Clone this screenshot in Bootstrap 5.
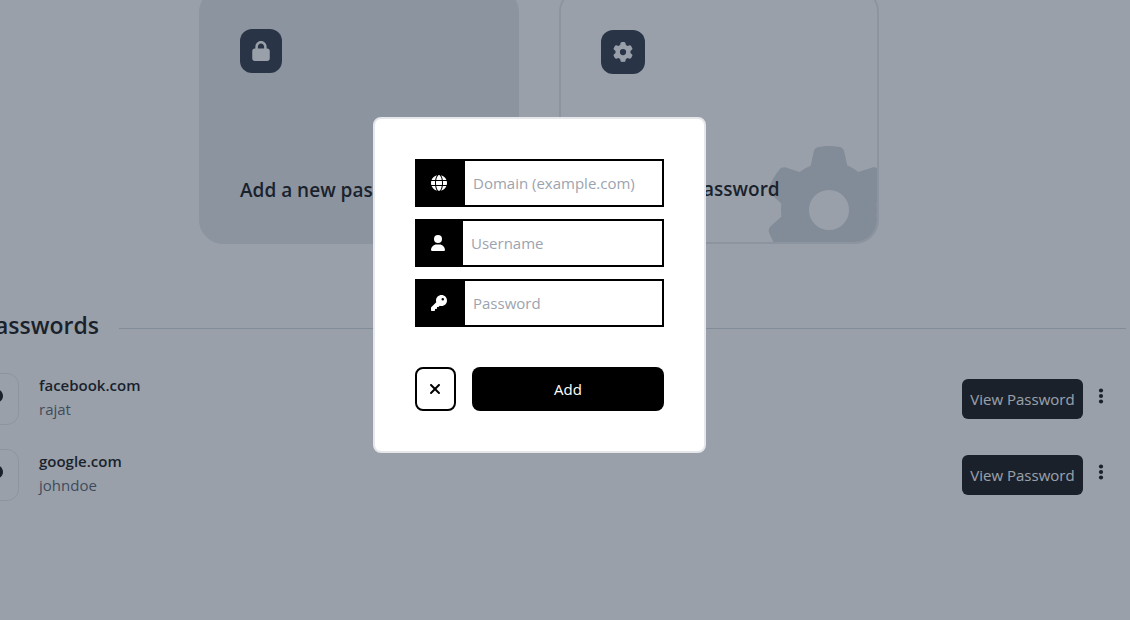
<!DOCTYPE html>
<html lang="en">
<head>
<meta charset="utf-8">
<meta name="viewport" content="width=device-width, initial-scale=1">
<title>Password Manager</title>
<link href="https://cdn.jsdelivr.net/npm/bootstrap@5.3.0/dist/css/bootstrap.min.css" rel="stylesheet">
<style>
  body { font-family: "Segoe UI", "Open Sans", "Noto Sans", sans-serif; font-size: 15px; line-height: 24px; color: #000; background: #fff; overflow: hidden; }
  svg { display: block; fill: currentColor; }
  /* The dashboard is scrolled a little down and to the right */
  .dashboard { margin: -12px 0 0 -52px; }
  .tiles { gap: 40px; }
  .tile { width: 320px; height: 256px; padding: 40px 40px 39px; border: 2px solid #e5e7eb; border-radius: 24px; position: relative; overflow: hidden; }
  .tile-filled { background: #e5e7eb; border-width: 1px; }
  .tile-icon { width: fit-content; padding: 12px; border-radius: 12px; background: #1f2937; color: #fff; }
  .tile h2 { position: relative; z-index: 1; font-size: 19px; line-height: 28px; font-weight: 600; margin: auto 0 0; white-space: nowrap; }
  .tile-art { position: absolute; right: -16px; bottom: -32px; color: #d1d5db; }
  .saved { padding: 63px 4px 0 19px; }
  .saved-title { gap: 20px; margin-bottom: 30px; }
  .saved-title h1 { width: 132px; font-size: 23px; line-height: 36px; font-weight: 600; text-align: right; margin: 0; }
  .saved-title hr { margin: 6px 0 0; border-top: 1px solid #d1d5db; opacity: 1; }
  .entry { gap: 20px; margin-bottom: 24px; padding-right: 22px; }
  .entry-icon { padding: 15px; border: 1px solid #e5e7eb; border-radius: 12px; }
  .entry-text { padding-bottom: 4px; }
  .entry-name { font-weight: 600; }
  .entry-user { color: #4b5563; }
  .btn-view { --bs-btn-color: #fff; --bs-btn-bg: #000; --bs-btn-hover-color: #fff; --bs-btn-hover-bg: #1f2937; width: 121px; padding: 8px 0; font-size: 15px; line-height: 24px; border: 0; border-radius: 6px; }
  .btn-more { padding: 0; width: 6px; border: 0; background: none; margin: 0 0 6px 15px; color: #000; }
  .backdrop { background: rgba(51, 65, 85, .5); padding: 0 51px 50px 0; }
  .dialog-box { width: 333px; padding: 40px; background: #fff; border: 2px solid #e5e7eb; border-radius: 8px; }
  .fields { gap: 12px; margin-bottom: 40px; }
  .field { border: 2px solid #000; }
  .field label { padding: 14px 16px 14px 14px; border-right: 2px solid #000; background: #000; color: #fff; }
  .field .form-control { min-width: 0; height: 44px; padding: 0 8px; font-size: 15px; border: 0; border-radius: 0; }
  .field .form-control::placeholder { color: #9ca3af; }
  .btn-close-box { width: 41px; height: 44px; padding: 0 1px 0 0; border: 2px solid #000; border-radius: 8px; background: #fff; color: #000; }
  .btn-add { --bs-btn-color: #fff; --bs-btn-bg: #000; --bs-btn-hover-color: #fff; --bs-btn-hover-bg: #1f2937; height: 44px; padding: 0; font-size: 15px; border: 0; border-radius: 8px; }
</style>
</head>
<body>
<svg class="d-none" aria-hidden="true">
  <symbol id="gear" viewBox="0 0 512 512"><path d="M495.9 166.6c3.2 8.7 .5 18.4-6.4 24.6l-43.3 39.4c1.1 8.3 1.7 16.8 1.7 25.4s-.6 17.1-1.7 25.4l43.3 39.4c6.9 6.2 9.6 15.9 6.4 24.6c-4.4 11.9-9.7 23.3-15.8 34.3l-4.7 8.1c-6.6 11-14 21.4-22.1 31.2c-5.9 7.2-15.7 9.6-24.5 6.8l-55.7-17.7c-13.4 10.3-28.2 18.9-44 25.4l-12.5 57.1c-2 9.1-9 16.3-18.2 17.8c-13.8 2.3-28 3.5-42.5 3.5s-28.7-1.2-42.5-3.5c-9.2-1.5-16.2-8.7-18.2-17.8l-12.5-57.1c-15.8-6.5-30.6-15.1-44-25.4L83.1 425.9c-8.8 2.8-18.6 .3-24.5-6.8c-8.1-9.8-15.5-20.2-22.1-31.2l-4.7-8.1c-6.1-11-11.4-22.4-15.8-34.3c-3.2-8.7-.5-18.4 6.4-24.6l43.3-39.4C64.6 273.1 64 264.6 64 256s.6-17.1 1.7-25.4L22.4 191.2c-6.9-6.2-9.6-15.9-6.4-24.6c4.4-11.9 9.7-23.3 15.8-34.3l4.7-8.1c6.6-11 14-21.4 22.1-31.2c5.9-7.2 15.7-9.6 24.5-6.8l55.7 17.7c13.4-10.3 28.2-18.9 44-25.4l12.5-57.1c2-9.1 9-16.3 18.2-17.8C227.3 1.2 241.5 0 256 0s28.7 1.2 42.5 3.5c9.2 1.5 16.2 8.7 18.2 17.8l12.5 57.1c15.8 6.5 30.6 15.1 44 25.4l55.7-17.7c8.8-2.8 18.6-.3 24.5 6.8c8.1 9.8 15.5 20.2 22.1 31.2l4.7 8.1c6.1 11 11.4 22.4 15.8 34.3zM256 336a80 80 0 1 0 0-160 80 80 0 1 0 0 160z"/></symbol>
  <symbol id="key" viewBox="0 0 512 512"><path d="M336 352c97.2 0 176-78.8 176-176S433.2 0 336 0S160 78.8 160 176c0 18.7 2.9 36.8 8.3 53.7L7 391c-4.5 4.5-7 10.6-7 17v80c0 13.3 10.7 24 24 24h80c13.3 0 24-10.7 24-24V448h40c13.3 0 24-10.7 24-24V384h40c6.4 0 12.5-2.5 17-7l33.3-33.3c16.9 5.4 35 8.3 53.7 8.3zM376 96a40 40 0 1 1 0 80 40 40 0 1 1 0-80z"/></symbol>
  <symbol id="dots" viewBox="0 0 6 18"><circle cx="3" cy="3.5" r="2.1"/><circle cx="3" cy="9" r="2.1"/><circle cx="3" cy="14.5" r="2.1"/></symbol>
</svg>

<main class="dashboard">
  <section class="tiles d-flex justify-content-center">
    <article class="tile tile-filled d-flex flex-column">
      <div class="tile-icon"><svg width="18" height="20" viewBox="0 0 448 512"><path d="M144 144v48H304V144c0-44.2-35.8-80-80-80s-80 35.8-80 80zM80 192V144C80 64.5 144.5 0 224 0s144 64.5 144 144v48h16c35.3 0 64 28.7 64 64V448c0 35.3-28.7 64-64 64H64c-35.3 0-64-28.7-64-64V256c0-35.3 28.7-64 64-64H80z"/></svg></div>
      <h2>Add a new password</h2>
    </article>
    <article class="tile d-flex flex-column">
      <div class="tile-icon"><svg width="20" height="20"><use href="#gear"/></svg></div>
      <h2>Generate Password</h2>
      <svg class="tile-art" width="128" height="128"><use href="#gear"/></svg>
    </article>
  </section>

  <section class="saved">
    <div class="saved-title d-flex align-items-center">
      <h1>Passwords</h1>
      <hr class="flex-grow-1">
    </div>
    <div class="entry d-flex align-items-center">
      <div class="entry-icon"><svg width="20" height="20"><use href="#key"/></svg></div>
      <div class="entry-text flex-grow-1">
        <div class="entry-name">facebook.com</div>
        <div class="entry-user">rajat</div>
      </div>
      <div class="d-flex align-items-center">
        <button type="button" class="btn btn-view">View Password</button>
        <button type="button" class="btn-more" aria-label="More options"><svg width="6" height="18"><use href="#dots"/></svg></button>
      </div>
    </div>
    <div class="entry d-flex align-items-center">
      <div class="entry-icon"><svg width="20" height="20"><use href="#key"/></svg></div>
      <div class="entry-text flex-grow-1">
        <div class="entry-name">google.com</div>
        <div class="entry-user">johndoe</div>
      </div>
      <div class="d-flex align-items-center">
        <button type="button" class="btn btn-view">View Password</button>
        <button type="button" class="btn-more" aria-label="More options"><svg width="6" height="18"><use href="#dots"/></svg></button>
      </div>
    </div>
  </section>
</main>

<div class="backdrop position-fixed top-0 start-0 w-100 h-100 z-3 d-flex align-items-center justify-content-center">
  <form class="dialog-box" role="dialog" aria-label="Add a password">
    <div class="fields d-flex flex-column">
      <div class="field d-flex">
        <label for="domain" aria-label="Domain"><svg width="16" height="16" viewBox="0 0 512 512"><path d="M352 256c0 22.2-1.2 43.6-3.3 64H163.3c-2.2-20.4-3.3-41.8-3.3-64s1.2-43.6 3.3-64H348.7c2.2 20.4 3.3 41.8 3.3 64zm28.8-64H503.9c5.3 20.5 8.1 41.9 8.1 64s-2.8 43.5-8.1 64H380.8c2.1-20.6 3.2-42 3.2-64s-1.1-43.4-3.2-64zm112.6-32H376.7c-10-63.9-29.8-117.4-55.3-151.6c78.3 20.7 142 77.5 171.9 151.6zm-149.1 0H167.7c6.1-36.4 15.5-68.6 27-94.7c10.5-23.6 22.2-40.7 33.5-51.5C239.4 3.2 248.7 0 256 0s16.6 3.2 27.8 13.8c11.3 10.8 23 27.9 33.5 51.5c11.6 26 20.9 58.2 27 94.7zm-209 0H18.6C48.6 85.9 112.2 29.1 190.6 8.4C165.1 42.6 145.3 96.1 135.3 160zM8.1 192H131.2c-2.1 20.6-3.2 42-3.2 64s1.1 43.4 3.2 64H8.1C2.8 299.5 0 278.1 0 256s2.8-43.5 8.1-64zM194.7 446.6c-11.6-26-20.9-58.2-27-94.6H344.3c-6.1 36.4-15.5 68.6-27 94.6c-10.5 23.6-22.2 40.7-33.5 51.5C272.6 508.8 263.3 512 256 512s-16.6-3.2-27.8-13.8c-11.3-10.8-23-27.9-33.5-51.5zM135.3 352c10 63.9 29.8 117.4 55.3 151.6C112.2 482.9 48.6 426.1 18.6 352H135.3zm358.1 0c-30 74.1-93.6 130.9-171.9 151.6c25.5-34.2 45.2-87.7 55.3-151.6H493.4z"/></svg></label>
        <input id="domain" class="form-control" type="text" placeholder="Domain (example.com)">
      </div>
      <div class="field d-flex">
        <label for="username" aria-label="Username"><svg width="14" height="16" viewBox="0 0 448 512"><path d="M224 256A128 128 0 1 0 224 0a128 128 0 1 0 0 256zm-45.7 48C79.8 304 0 383.8 0 482.3C0 498.7 13.3 512 29.7 512H418.3c16.4 0 29.7-13.3 29.7-29.7C448 383.8 368.2 304 269.7 304H178.3z"/></svg></label>
        <input id="username" class="form-control" type="text" placeholder="Username">
      </div>
      <div class="field d-flex">
        <label for="password" aria-label="Password"><svg width="16" height="16"><use href="#key"/></svg></label>
        <input id="password" class="form-control" type="password" placeholder="Password">
      </div>
    </div>
    <div class="d-flex gap-3">
      <button type="button" class="btn-close-box flex-shrink-0 d-flex align-items-center justify-content-center" aria-label="Close"><svg width="12" height="16" viewBox="0 0 384 512"><path d="M342.6 150.6c12.5-12.5 12.5-32.8 0-45.3s-32.8-12.5-45.3 0L192 210.7 86.6 105.4c-12.5-12.5-32.8-12.5-45.3 0s-12.5 32.8 0 45.3L146.7 256 41.4 361.4c-12.5 12.5-12.5 32.8 0 45.3s32.8 12.5 45.3 0L192 301.3 297.4 406.6c12.5 12.5 32.8 12.5 45.3 0s12.5-32.8 0-45.3L237.3 256 342.6 150.6z"/></svg></button>
      <button type="submit" class="btn btn-add flex-grow-1">Add</button>
    </div>
  </form>
</div>
<script src="https://cdn.jsdelivr.net/npm/bootstrap@5.3.0/dist/js/bootstrap.bundle.min.js"></script>
</body>
</html>
